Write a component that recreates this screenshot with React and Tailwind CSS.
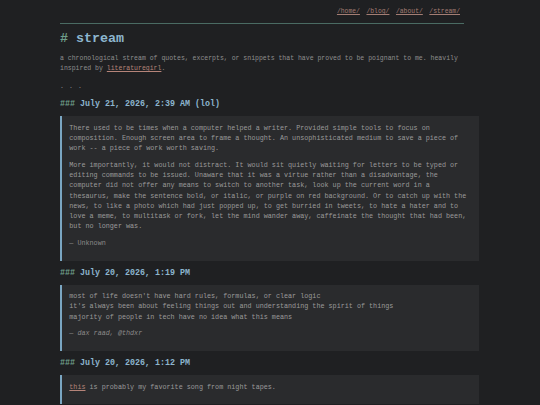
import React from "react";

const entries = [
  {
    date: "July 21, 2026, 2:39 AM (lol)",
    body: (
      <>
        <p>
          There used to be times when a computer helped a writer. Provided simple tools to focus on composition. Enough
          screen area to frame a thought. An unsophisticated medium to save a piece of work -- a piece of work worth
          saving.
        </p>
        <p>
          More importantly, it would not distract. It would sit quietly waiting for letters to be typed or editing
          commands to be issued. Unaware that it was a virtue rather than a disadvantage, the computer did not offer any
          means to switch to another task, look up the current word in a thesaurus, make the sentence bold, or italic,
          or purple on red background. Or to catch up with the news, to like a photo which had just popped up, to get
          burried in tweets, to hate a hater and to love a meme, to multitask or fork, let the mind wander away,
          caffeinate the thought that had been, but no longer was.
        </p>
        <p className="text-[#8a8a8a]">— Unknown</p>
      </>
    ),
  },
  {
    date: "July 20, 2026, 1:19 PM",
    body: (
      <>
        <p>
          most of life doesn't have hard rules, formulas, or clear logic
          <br />
          it's always been about feeling things out and understanding the spirit of things
          <br />
          majority of people in tech have no idea what this means
        </p>
        <p className="text-[#8a8a8a]">
          — <em>dax raad, @thdxr</em>
        </p>
      </>
    ),
  },
  {
    date: "July 20, 2026, 1:12 PM",
    body: (
      <p>
        <a className="text-[#b58479] underline">this</a> is probably my favorite song from night tapes.
      </p>
    ),
  },
];

export default function App() {
  return (
    <div className="min-h-screen bg-[#1f2022] font-['Courier_New','Nimbus_Mono_PS','FreeMono','Liberation_Mono',monospace] text-[#909090]">
      <div className="mx-auto w-[420px]">
        {/* nav */}
        <div className="w-[404px]">
          <nav className="flex justify-end gap-[6.5px] pt-[8px] pr-[4px] text-[6.4px] leading-[8px] text-[#a37d74]">
            <a className="underline">/home/</a>
            <a className="underline">/blog/</a>
            <a className="underline">/about/</a>
            <a className="underline">/stream/</a>
          </nav>
          <div className="mt-[7px] border-t border-[#4a6b63]" />
        </div>

        <h1 className="mt-[7px] text-[13.33px] leading-[16px] font-bold">
          <span className="text-[#6f9f8b]">#</span> <span className="text-[#8db6cf]">stream</span>
        </h1>

        <p className="mt-[7px] w-[404px] text-[6.5px] leading-[10.2px] text-[#8e8e8e]">
          a chronological stream of quotes, excerpts, or snippets that have proved to be poignant to me. heavily
          inspired by <a className="text-[#b58479] underline">literaturegirl</a>.
        </p>

        <div className="mt-[7.6px] text-[6.5px] leading-[10.2px] tracking-[0.6px] text-[#8e8e8e]">. . .</div>

        {entries.map((e) => (
          <section key={e.date}>
            <h3 className="mt-[6px] text-[8.33px] leading-[12px] font-bold">
              <span className="text-[#6f9f8b]">###</span> <span className="text-[#8db6cf]">{e.date}</span>
            </h3>
            <blockquote className="mt-[6px] w-[419px] border-l-2 border-[#7aa6c2] bg-[#2a2b2d] pt-[6.5px] pb-[12.5px] pl-[7.3px] pr-[9.7px] text-[6.75px] leading-[10.25px] text-[#9a9a9a] space-y-[6.4px]">
              {e.body}
            </blockquote>
          </section>
        ))}
      </div>
    </div>
  );
}
